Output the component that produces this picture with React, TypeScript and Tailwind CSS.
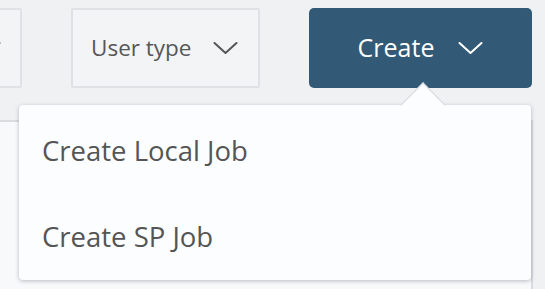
const FONT = { fontFamily: '"Open Sans", "Noto Sans", sans-serif' };

const Chevron = ({ className }: { className?: string }) => (
  <svg viewBox="0 0 24 12" fill="none" className={className}>
    <path d="M1 1l11 10L23 1" stroke="currentColor" strokeWidth="2" strokeLinecap="round" strokeLinejoin="round" />
  </svg>
);

const FilterBox = ({ label, className }: { label?: string; className?: string }) => (
  <div
    className={`flex h-[80px] shrink-0 items-center justify-between rounded-[2px] border-2 border-[#dfe1e4] bg-[#f3f4f6] pl-[18px] ${className ?? ''}`}
  >
    <span className="text-[22.5px] leading-none text-[#575757]">{label}</span>
    <Chevron className="h-[12px] w-[25px] text-[#555]" />
  </div>
);

const App = () => {
  const items = ['Create Local Job', 'Create SP Job'];

  return (
    <div className="relative h-[289px] w-[545px] overflow-hidden bg-[#f0f1f3]" style={FONT}>
      <div className="flex justify-end gap-[49px] pr-[13px] pt-[8px]">
        <FilterBox className="w-[160px] pr-[19px]" />
        <FilterBox label="User type" className="w-[189px] pr-[20px]" />
        <button className="flex h-[80px] w-[223px] shrink-0 items-center justify-center gap-[24px] rounded-[5px] bg-[#325a76] text-[25px] text-white">
          Create
          <Chevron className="h-[12px] w-[25px] text-white" />
        </button>
      </div>

      <div className="mt-[32px] h-[200px] w-[533px] border-r-2 border-t-2 border-[#d9dbde] bg-[#f8f9fa]" />

      <div className="absolute left-[19px] top-[105px] h-[175px] w-[512px] rounded-[4px] bg-[#fcfdfe] pt-[3px] shadow-[0_1px_4px_rgba(60,70,85,0.35)]">
        <div className="absolute left-[388px] top-[-16px] h-[32px] w-[32px] rotate-45 border-l border-t border-[#d3d6da] bg-[#fcfdfe]" />
        {items.map((item) => (
          <div key={item} className="relative flex h-[86px] items-center pl-[23px] text-[27.5px] text-[#555]">
            {item}
          </div>
        ))}
      </div>
    </div>
  );
};

export default App;
